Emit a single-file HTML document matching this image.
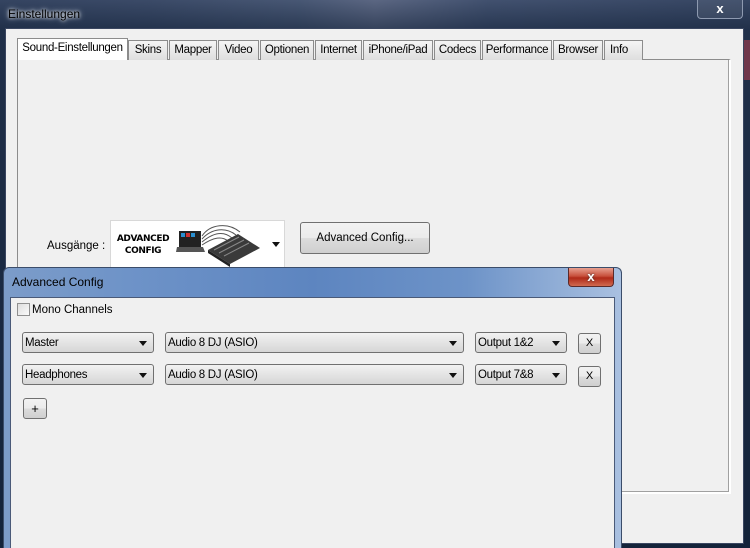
<!DOCTYPE html>
<html><head><meta charset="utf-8"><style>
*{margin:0;padding:0;box-sizing:border-box}
html,body{width:750px;height:548px;overflow:hidden}
body{position:relative;font-family:"Liberation Sans",sans-serif;font-size:11px;color:#000;background:#1c2a40}
.abs{position:absolute}
.bg{left:0;top:0;width:750px;height:548px;background:linear-gradient(90deg,#2a3a55 0%,#3a4a66 20%,#5a6a85 40%,#8a90a8 50%,#4a5a78 65%,#2d3d58 100%)}
.frame{left:0;top:0;width:750px;height:548px;background:linear-gradient(180deg,rgba(60,75,105,.6),rgba(30,45,70,.8) 30px,#14233a)}
.client{left:5px;top:28px;width:739px;height:516px;background:#f0f0f0;border:1px solid #3a4660}
.tab{top:40px;height:20px;border:1px solid #8c8c8c;border-bottom:none;background:linear-gradient(#f5f5f5,#dedede);font-size:11.5px;line-height:19px;text-align:center;letter-spacing:-.3px}
.panel{left:17px;top:59px;width:714px;height:435px;border:1px solid #8c8c8c;border-right:2px solid #fff;border-bottom:2px solid #fff;box-shadow:inset -1px -1px 0 #a0a0a0;background:#f0f0f0}
.btn{border:1px solid #707070;border-radius:3px;background:linear-gradient(#f2f2f2 0%,#ebebeb 50%,#dcdcdc 51%,#cfcfcf 100%);text-align:center}
.dlg{left:3px;top:267px;width:619px;height:281px;border:1px solid #3b4d6a;border-bottom:none;border-radius:6px 6px 0 0;background:linear-gradient(90deg,#7c9cc9 0%,#6e93c8 20%,#5d85c0 50%,#6d93c8 75%,#a9c0e0 100%)}
.dlgin{left:10px;top:297px;width:605px;height:251px;background:#f0f0f0;border:1px solid #4a5a78;border-bottom:none}
.sel{height:21px;border:1px solid #707070;border-radius:3px;background:linear-gradient(#f2f2f2,#e4e4e4 50%,#d6d6d6);font-size:11.5px;line-height:20px;padding-left:2px;letter-spacing:-.3px}
.sel:after{content:"";position:absolute;right:6px;top:8px;border:4px solid transparent;border-top:5px solid #111;border-bottom:0}
</style></head><body>
<div class="abs bg"></div>
<div class="abs frame"></div>
<div class="abs" style="left:8px;top:7px;color:#000;font-size:12px;text-shadow:0 0 6px #dfe6f0,0 0 3px #fff">Einstellungen</div>
<div class="abs" style="left:697px;top:0;width:46px;height:19px;border:1px solid #8e9ab0;border-top:none;border-radius:0 0 4px 4px;background:rgba(255,255,255,.08);color:#fff;font-weight:bold;font-size:13px;text-align:center;line-height:18px">x</div>
<div class="abs" style="left:744px;top:40px;width:6px;height:40px;background:#c04050;opacity:.5"></div>
<div class="abs client"></div>
<div class="abs panel"></div>
<div class="abs tab" style="left:17px;top:38px;width:111px;height:22px;background:#fff;border-color:#8c8c8c;z-index:2">Sound-Einstellungen</div>
<div class="abs tab" style="left:128px;width:40px">Skins</div>
<div class="abs tab" style="left:169px;width:48px">Mapper</div>
<div class="abs tab" style="left:218px;width:41px">Video</div>
<div class="abs tab" style="left:260px;width:54px">Optionen</div>
<div class="abs tab" style="left:315px;width:47px">Internet</div>
<div class="abs tab" style="left:363px;width:70px">iPhone/iPad</div>
<div class="abs tab" style="left:434px;width:47px">Codecs</div>
<div class="abs tab" style="left:482px;width:70px">Performance</div>
<div class="abs tab" style="left:553px;width:50px">Browser</div>
<div class="abs tab" style="left:604px;width:39px;text-align:left;padding-left:5px">Info</div>
<div class="abs" style="left:47px;top:240px;font-size:11.5px">Ausgänge :</div>
<div class="abs" style="left:110px;top:220px;width:175px;height:48px;background:#fff;border:1px solid #d8d8d8"></div>
<div class="abs" style="left:114px;top:233px;width:58px;font-weight:bold;font-size:9px;line-height:12px;text-align:center;font-family:'DejaVu Sans',sans-serif;letter-spacing:-.4px">ADVANCED<br>CONFIG</div>
<svg class="abs" style="left:176px;top:222px" width="90" height="45" viewBox="0 0 90 45">
<rect x="3" y="9" width="22" height="16" fill="#222"/><rect x="5" y="11" width="4" height="4" fill="#2a8fd0"/><rect x="10" y="11" width="4" height="4" fill="#d03030"/><rect x="15" y="11" width="4" height="4" fill="#2a8fd0"/>
<polygon points="1,25 27,25 29,30 0,30" fill="#555"/>
<path d="M26 14 C34 2,52 0,64 10 M26 17 C36 6,50 5,60 13 M26 20 C38 10,48 9,56 16 M26 23 C38 15,46 14,52 19" stroke="#555" fill="none" stroke-width="1"/>
<polygon points="32,28 62,12 84,26 54,42" fill="#3a3a3a"/><polygon points="32,28 54,42 54,45 32,31" fill="#222"/>
<path d="M38 28 L63 15 M43 31 L68 18 M48 34 L73 21" stroke="#888" stroke-width="1"/>
</svg>
<div class="abs" style="left:272px;top:242px;border:4px solid transparent;border-top:5px solid #111"></div>
<div class="abs btn" style="left:300px;top:222px;width:130px;height:32px;line-height:30px;font-size:11.5px">Advanced Config...</div>
<div class="abs dlg"></div>
<div class="abs" style="left:12px;top:275px;font-size:12px">Advanced Config</div>
<div class="abs" style="left:568px;top:268px;width:46px;height:19px;border:1px solid #5a2a2a;border-top:none;border-radius:0 0 4px 4px;background:linear-gradient(#e8a090,#c8503c 45%,#b02a18 55%,#d06a50);color:#fff;font-weight:bold;font-size:13px;text-align:center;line-height:17px;text-shadow:0 0 2px #333">x</div>
<div class="abs dlgin"></div>
<div class="abs" style="left:17px;top:303px;width:13px;height:13px;border:1px solid #8f8f8f;background:linear-gradient(135deg,#ddd,#fafafa)"></div>
<div class="abs" style="left:32px;top:304px;font-size:11.5px">Mono Channels</div>
<div class="abs sel" style="left:22px;top:332px;width:132px">Master</div>
<div class="abs sel" style="left:165px;top:332px;width:299px">Audio 8 DJ (ASIO)</div>
<div class="abs sel" style="left:475px;top:332px;width:92px">Output 1&amp;2</div>
<div class="abs btn" style="left:578px;top:333px;width:23px;height:21px;line-height:19px">X</div>
<div class="abs sel" style="left:22px;top:364px;width:132px">Headphones</div>
<div class="abs sel" style="left:165px;top:364px;width:299px">Audio 8 DJ (ASIO)</div>
<div class="abs sel" style="left:475px;top:364px;width:92px">Output 7&amp;8</div>
<div class="abs btn" style="left:578px;top:366px;width:23px;height:21px;line-height:19px">X</div>
<div class="abs btn" style="left:23px;top:398px;width:24px;height:21px;line-height:19px;font-size:13px">+</div>
</body></html>
